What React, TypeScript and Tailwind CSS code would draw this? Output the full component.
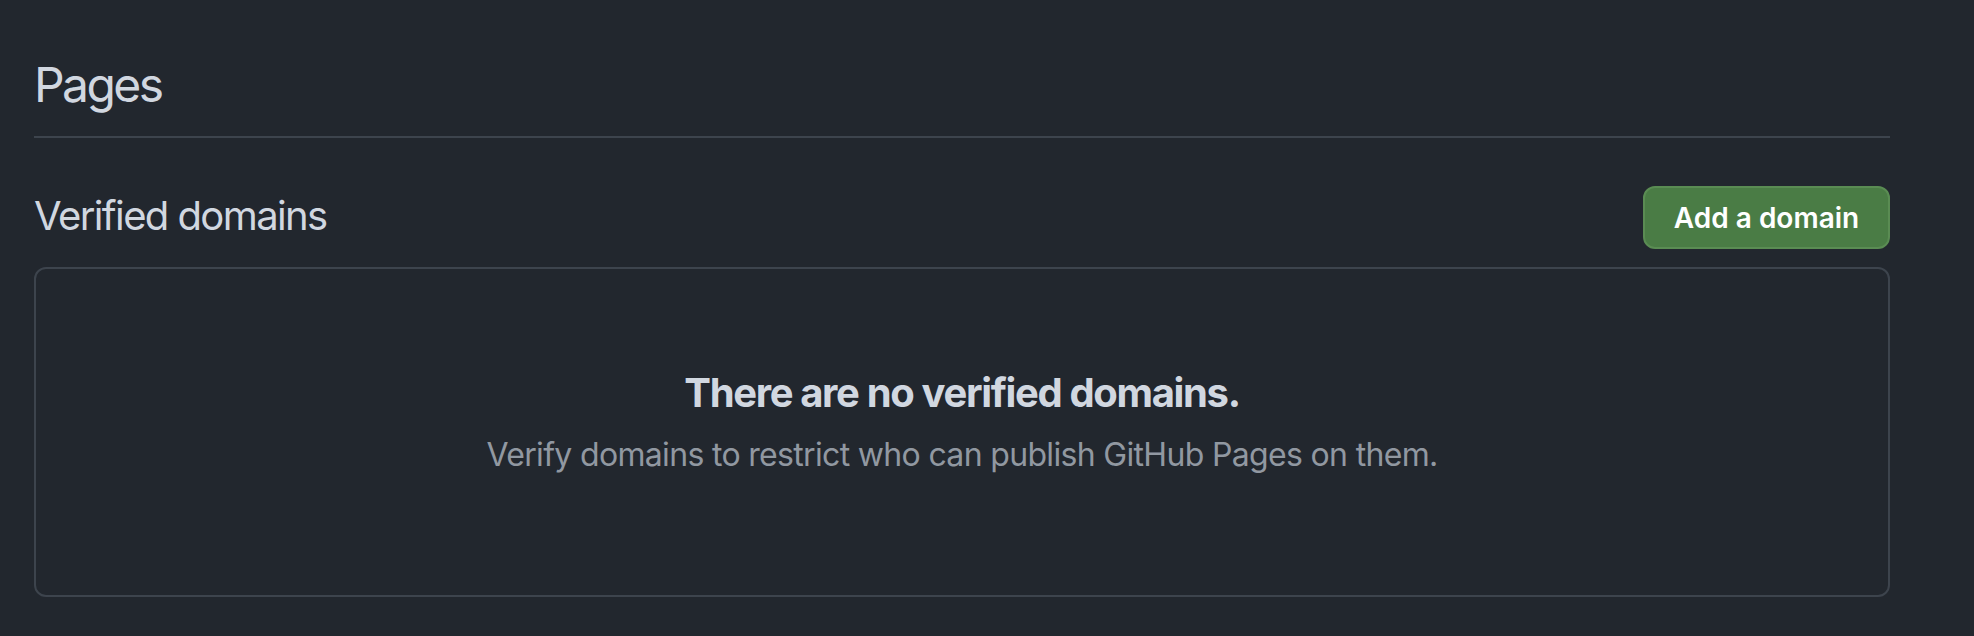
export default function App() {
  return (
    <div
      className="min-h-[636px] w-full bg-[#22272e] pl-[34px] pr-[84px]"
      style={{ fontFamily: "Inter, 'Noto Sans', sans-serif" }}
    >
      <div className="border-b-2 border-[#3d444d] pt-[55px] pb-[21px]">
        <h1 className="text-[48px] leading-[60px] font-normal tracking-[-2.6px] text-[#d1d7e0]">Pages</h1>
      </div>

      <div className="mt-[48px] flex items-center justify-between">
        <h2 className="pb-[4px] text-[40px] leading-[48px] font-normal tracking-[-1.6px] text-[#d1d7e0]">
          Verified domains
        </h2>
        <button className="flex h-[63px] w-[247px] items-center justify-center rounded-[12px] border-2 border-[#5a8c53] bg-[#4a7c45] text-[28px] font-semibold text-white">
          Add a domain
        </button>
      </div>

      <div className="mt-[18px] flex h-[330px] flex-col items-center rounded-[12px] border-2 border-[#3d444d] pt-[94px]">
        <h3 className="text-[40px] leading-[60px] font-bold tracking-[-1.35px] text-[#d1d7e0]">
          There are no verified domains.
        </h3>
        <p className="mt-[8px] text-[32px] leading-[48px] tracking-[-0.67px] text-[#9198a1]">
          Verify domains to restrict who can publish GitHub Pages on them.
        </p>
      </div>
    </div>
  );
}
